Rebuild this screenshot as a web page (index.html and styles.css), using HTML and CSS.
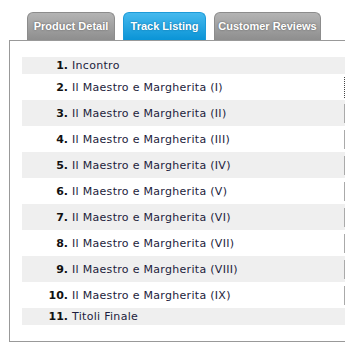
FILE: index.html
```html
<!DOCTYPE html>
<html lang="en">
<head>
    <meta charset="UTF-8">
    <meta name="viewport" content="width=device-width, initial-scale=1.0">
    <title>Track Listing</title>
    <link rel="stylesheet" href="styles.css">
</head>
<body>
    <div class="tabs">
        <div class="tab detail">Product Detail</div>
        <div class="tab tracks active">Track Listing</div>
        <div class="tab reviews">Customer Reviews</div>
    </div>
    <div class="panel">
        <div class="track short"><span class="num">1.</span><span class="title">Incontro</span></div>
        <div class="track"><span class="num">2.</span><span class="title">Il Maestro e Margherita (I)</span><span class="player focus"></span></div>
        <div class="track"><span class="num">3.</span><span class="title">Il Maestro e Margherita (II)</span><span class="player"></span></div>
        <div class="track"><span class="num">4.</span><span class="title">Il Maestro e Margherita (III)</span><span class="player"></span></div>
        <div class="track"><span class="num">5.</span><span class="title">Il Maestro e Margherita (IV)</span><span class="player"></span></div>
        <div class="track"><span class="num">6.</span><span class="title">Il Maestro e Margherita (V)</span><span class="player"></span></div>
        <div class="track"><span class="num">7.</span><span class="title">Il Maestro e Margherita (VI)</span><span class="player"></span></div>
        <div class="track"><span class="num">8.</span><span class="title">Il Maestro e Margherita (VII)</span><span class="player"></span></div>
        <div class="track"><span class="num">9.</span><span class="title">Il Maestro e Margherita (VIII)</span><span class="player"></span></div>
        <div class="track"><span class="num">10.</span><span class="title">Il Maestro e Margherita (IX)</span><span class="player"></span></div>
        <div class="track short"><span class="num">11.</span><span class="title">Titoli Finale</span></div>
    </div>
</body>
</html>
```

FILE: styles.css
```css
body {
    margin: 0;
    padding: 0;
    background: #fff;
    font-family: "DejaVu Sans", Verdana, sans-serif;
    overflow: hidden;
}
.tabs {
    display: flex;
    gap: 8px;
    padding: 12px 0 0 27px;
    height: 28px;
}
.tab {
    flex: 0 0 auto;
    box-sizing: border-box;
    height: 28px;
    border: 1px solid #8c8c8c;
    border-bottom: none;
    border-radius: 6px 6px 0 0;
    background: linear-gradient(#b4b4b4, #8e8e8e);
    color: #fff;
    font-family: "Liberation Sans", Arial, sans-serif;
    font-size: 11px;
    font-weight: bold;
    line-height: 27px;
    text-align: center;
    white-space: nowrap;
    text-shadow: 0 0 2px #555;
}
.tab.detail {
    width: 88px;
}
.tab.tracks {
    width: 83px;
}
.tab.reviews {
    width: 107px;
}
.tab.active {
    border-color: #1c9ad8;
    background: linear-gradient(#45b9ee, #0a94d6);
    text-shadow: 0 0 2px #06679a;
}
.panel {
    width: 360px;
    margin-left: 9px;
    padding: 16px 0 16px 12px;
    border: 1px solid #999;
}
.track {
    display: flex;
    align-items: center;
    height: 26px;
    font-size: 11px;
    color: #1c1c3c;
}
.track:nth-child(odd) {
    background: #efefef;
}
.track.short {
    height: 17px;
}
.num {
    width: 46px;
    text-align: right;
    font-weight: bold;
    color: #111;
}
.title {
    flex: 0 0 276px;
    padding-left: 4px;
    box-sizing: border-box;
    letter-spacing: 0.3px;
}
.player {
    width: 20px;
    height: 19px;
    border-left: 1px solid #aaa;
    background: linear-gradient(#fafafa, #eee);
}
.player.focus {
    height: 21px;
    border-left: 1px dotted #444;
    background: none;
}
```
